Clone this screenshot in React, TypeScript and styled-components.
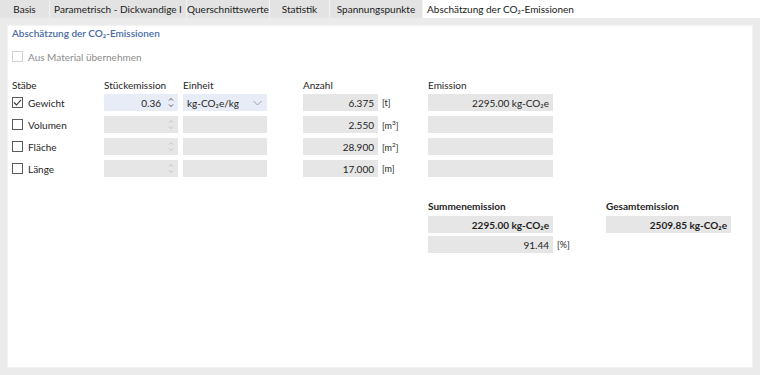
import React from "react";
import styled, { createGlobalStyle } from "styled-components";

const Global = createGlobalStyle`
  html, body { margin: 0; padding: 0; background: #ebebeb; }
  body { font-family: Lato, "Noto Sans", sans-serif; font-size: 10px; color: #1e1e1e; }
  * { box-sizing: border-box; }
`;

const Page = styled.div`
  width: 760px;
  height: 375px;
  display: flex;
  flex-direction: column;
  background: #ebebeb;
`;

const TabBar = styled.div`
  display: flex;
  height: 18px;
  background: #ffffff;
`;

const Tab = styled.div<{ $w: number; $active?: boolean }>`
  width: ${(p) => p.$w}px;
  height: 18px;
  line-height: 18px;
  text-align: center;
  white-space: nowrap;
  overflow: hidden;
  background: ${(p) => (p.$active ? "#ffffff" : "#e3e3e3")};
  border-right: 1px solid ${(p) => (p.$active ? "transparent" : "#f2f2f2")};
  color: #1a1a1a;
`;

const Frame = styled.div`
  flex: 1;
  padding: 7px;
  display: flex;
`;

const Panel = styled.div`
  flex: 1;
  background: #ffffff;
  border: 1px solid #f3f3f3;
  padding: 0 4px;
  display: flex;
  flex-direction: column;
`;

const Title = styled.div`
  height: 14px;
  line-height: 14px;
  color: #4a6aa5;
  font-weight: 600;
`;

const CheckRow = styled.div<{ $disabled?: boolean }>`
  display: flex;
  align-items: center;
  gap: 5px;
  height: 17px;
  color: ${(p) => (p.$disabled ? "#8c8c8c" : "#1e1e1e")};
`;

const Box = styled.span<{ $disabled?: boolean }>`
  width: 11px;
  height: 11px;
  border: 1px solid ${(p) => (p.$disabled ? "#d2d2d2" : "#5a5a5a")};
  background: #fff;
  display: flex;
  align-items: center;
  justify-content: center;
  flex: none;
`;

const Grid = styled.div`
  display: grid;
  grid-template-columns: 92px 79px 120px 125px 125px;
  grid-auto-rows: 17px;
  row-gap: 5px;
  align-items: center;
`;

const HeadGrid = styled(Grid)`
  grid-auto-rows: 14px;
`;

const Head = styled.div<{ $bold?: boolean }>`
  font-weight: ${(p) => (p.$bold ? 700 : 400)};
  color: #1e1e1e;
  line-height: 14px;
  white-space: nowrap;
`;

const Field = styled.div<{ $w: number; $tone?: "blue" | "gray"; $bold?: boolean; $align?: "left" | "right" }>`
  width: ${(p) => p.$w}px;
  height: 17px;
  background: ${(p) => (p.$tone === "blue" ? "#e8ecf6" : "#e6e6e6")};
  display: flex;
  align-items: center;
  justify-content: ${(p) => (p.$align === "left" ? "flex-start" : "flex-end")};
  padding: 0 4px 0 4px;
  font-weight: ${(p) => (p.$bold ? 700 : 400)};
  white-space: nowrap;
  gap: 7px;
`;

const Num = styled.span``;

const Grow = styled.span`
  flex: 1;
`;

const Cell = styled.div`
  display: flex;
  align-items: center;
  height: 17px;
`;

const Unit = styled.span`
  margin-left: 4px;
  font-size: 9px;
  color: #1e1e1e;
`;

const Sup = styled.sup`
  font-size: 6.5px;
  vertical-align: 4px;
`;

const Spacer = styled.div<{ $h: number }>`
  height: ${(p) => p.$h}px;
  flex: none;
`;

const SumGrid = styled.div`
  display: grid;
  grid-template-columns: 178px 125px;
  grid-template-rows: 14px 17px 17px;
  row-gap: 3px;
  margin-left: 416px;
  align-items: center;
`;

const Spin = ({ on }: { on: boolean }) => (
  <svg width="6" height="11" viewBox="0 0 6 11" style={{ flex: "none" }}>
    <path d="M1 3.5 L3 1.5 L5 3.5" fill="none" stroke={on ? "#555" : "#c4c4c4"} strokeWidth="1" />
    <path d="M1 7.5 L3 9.5 L5 7.5" fill="none" stroke={on ? "#555" : "#c4c4c4"} strokeWidth="1" />
  </svg>
);

const Chevron = () => (
  <svg width="9" height="6" viewBox="0 0 9 6" style={{ flex: "none", marginRight: 1 }}>
    <path d="M0.5 1 L4.5 5 L8.5 1" fill="none" stroke="#9a9a9a" strokeWidth="0.9" />
  </svg>
);

const Check = () => (
  <svg width="9" height="9" viewBox="0 0 9 9">
    <path d="M1 4.5 L3.5 7 L8 1.8" fill="none" stroke="#333" strokeWidth="1.1" />
  </svg>
);

const rows = [
  { name: "Gewicht", on: true, qty: "6.375", unit: <>[t]</>, em: "2295.00 kg-CO₂e" },
  { name: "Volumen", on: false, qty: "2.550", unit: <>[m<Sup>3</Sup>]</>, em: "" },
  { name: "Fläche", on: false, qty: "28.900", unit: <>[m<Sup>2</Sup>]</>, em: "" },
  { name: "Länge", on: false, qty: "17.000", unit: <>[m]</>, em: "" },
];

const tabs = [
  { t: "Basis", w: 50 },
  { t: "Parametrisch - Dickwandige I", w: 137 },
  { t: "Querschnittswerte", w: 83 },
  { t: "Statistik", w: 60 },
  { t: "Spannungspunkte", w: 93 },
  { t: "Abschätzung der CO₂-Emissionen", w: 156, active: true },
];

export default function App() {
  return (
    <>
      <Global />
      <Page>
        <TabBar>
          {tabs.map((t) => (
            <Tab key={t.t} $w={t.w} $active={t.active}>
              {t.t}
            </Tab>
          ))}
        </TabBar>
        <Frame>
          <Panel>
            <Title>Abschätzung der CO₂-Emissionen</Title>
            <Spacer $h={8} />
            <CheckRow $disabled>
              <Box $disabled />
              Aus Material übernehmen
            </CheckRow>
            <Spacer $h={13} />
            <HeadGrid>
              <Head>Stäbe</Head>
              <Head>Stückemission</Head>
              <Head>Einheit</Head>
              <Head>Anzahl</Head>
              <Head>Emission</Head>
            </HeadGrid>
            <Spacer $h={2} />
            <Grid>
              {rows.map((r) => (
                <React.Fragment key={r.name}>
                  <CheckRow>
                    <Box>{r.on && <Check />}</Box>
                    {r.name}
                  </CheckRow>
                  <Field $w={74} $tone={r.on ? "blue" : "gray"}>
                    {r.on && <Num>0.36</Num>}
                    <Spin on={r.on} />
                  </Field>
                  <Field $w={84} $tone={r.on ? "blue" : "gray"} $align="left">
                    {r.on && (
                      <>
                        <Grow>kg-CO₂e/kg</Grow>
                        <Chevron />
                      </>
                    )}
                  </Field>
                  <Cell>
                    <Field $w={75}>{r.qty}</Field>
                    <Unit>{r.unit}</Unit>
                  </Cell>
                  <Field $w={125}>{r.em}</Field>
                </React.Fragment>
              ))}
            </Grid>
            <Spacer $h={22} />
            <SumGrid>
              <Head $bold>Summenemission</Head>
              <Head $bold>Gesamtemission</Head>
              <Field $w={125} $bold>2295.00 kg-CO₂e</Field>
              <Field $w={125} $bold>2509.85 kg-CO₂e</Field>
              <Cell>
                <Field $w={125}>91.44</Field>
                <Unit>[%]</Unit>
              </Cell>
            </SumGrid>
          </Panel>
        </Frame>
      </Page>
    </>
  );
}
